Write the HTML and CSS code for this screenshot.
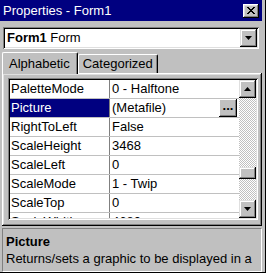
FILE: index.html
```html
<!DOCTYPE html>
<html lang="en">
<head>
    <meta charset="UTF-8">
    <title>Properties</title>
    <link rel="stylesheet" href="styles.css">
</head>
<body>
    <div class="window">
        <div class="titlebar">
            <span class="title">Properties - Form1</span>
            <div class="close">
                <svg width="8" height="7" viewBox="0 0 8 7"><path d="M0 0h2v1h1v1h2v-1h1v-1h2v1h-1v1h-1v1h-1v1h1v1h1v1h1v1h-2v-1h-1v-1h-2v1h-1v1h-2v-1h1v-1h1v-1h1v-1h-1v-1h-1v-1h-1z" fill="#000"/></svg>
            </div>
        </div>

        <div class="combo">
            <div class="combo-text"><b>Form1</b> Form</div>
            <div class="combo-btn">
                <svg width="7" height="4" viewBox="0 0 7 4"><path d="M0 0h7l-3.5 4z" fill="#000"/></svg>
            </div>
        </div>

        <div class="tabs">
            <div class="tab active">Alphabetic</div>
            <div class="tab">Categorized</div>
        </div>

        <div class="panel">
            <div class="grid">
                <div class="rows">
                    <div class="row"><div class="name">PaletteMode</div><div class="value">0 - Halftone</div></div>
                    <div class="row selected"><div class="name">Picture</div><div class="value">(Metafile)<span class="dots">...</span></div></div>
                    <div class="row"><div class="name">RightToLeft</div><div class="value">False</div></div>
                    <div class="row"><div class="name">ScaleHeight</div><div class="value">3468</div></div>
                    <div class="row"><div class="name">ScaleLeft</div><div class="value">0</div></div>
                    <div class="row"><div class="name">ScaleMode</div><div class="value">1 - Twip</div></div>
                    <div class="row"><div class="name">ScaleTop</div><div class="value">0</div></div>
                    <div class="row"><div class="name">ScaleWidth</div><div class="value">4680</div></div>
                </div>
                <div class="scrollbar">
                    <div class="sb-btn">
                        <svg width="7" height="4" viewBox="0 0 7 4"><path d="M3.5 0l3.5 4h-7z" fill="#000"/></svg>
                    </div>
                    <div class="track">
                        <div class="thumb"></div>
                    </div>
                    <div class="sb-btn">
                        <svg width="7" height="4" viewBox="0 0 7 4"><path d="M0 0h7l-3.5 4z" fill="#000"/></svg>
                    </div>
                </div>
            </div>
        </div>

        <div class="desc">
            <div class="desc-title">Picture</div>
            <div class="desc-text">Returns/sets a graphic to be displayed in a</div>
        </div>
    </div>
</body>
</html>
```

FILE: styles.css
```css
*{
    margin: 0;
    padding: 0;
    box-sizing: border-box;
}
body{
    background-color: #c0c0c0;
    font-family: "Liberation Sans", Arial, sans-serif;
    font-size: 13px;
    width: 266px;
    height: 273px;
    overflow: hidden;
}
.window{
    width: 266px;
    height: 273px;
    display: flex;
    flex-direction: column;
    border-right: 1px solid #000;
    border-bottom: 1px solid #000;
    padding-right: 3px;
}
.titlebar{
    height: 21px;
    background-color: #000080;
    color: #fff;
    display: flex;
    align-items: center;
    justify-content: space-between;
    padding: 0 3px 0 3px;
    font-size: 13px;
}
.close{
    width: 16px;
    height: 14px;
    background-color: #c0c0c0;
    box-shadow: inset -1px -1px #000, inset 1px 1px #fff, inset -2px -2px #808080, inset 2px 2px #dfdfdf;
    display: flex;
    align-items: center;
    justify-content: center;
}
.combo{
    margin: 6px 3px 0 3px;
    height: 22px;
    background-color: #fff;
    padding: 2px;
    box-shadow: inset 1px 1px #808080, inset -1px -1px #fff, inset 2px 2px #000, inset -2px -2px #dfdfdf;
    display: flex;
}
.combo-text{
    flex: 1;
    padding-left: 2px;
    line-height: 18px;
}
.combo-btn{
    width: 17px;
    background-color: #c0c0c0;
    box-shadow: inset -1px -1px #000, inset 1px 1px #dfdfdf, inset -2px -2px #808080, inset 2px 2px #fff;
    display: flex;
    align-items: center;
    justify-content: center;
}
.tabs{
    display: flex;
    margin-top: 3px;
    padding-left: 2px;
    height: 21px;
    align-items: flex-end;
    position: relative;
    z-index: 1;
}
.tab{
    height: 19px;
    padding: 0 4px;
    line-height: 18px;
    border-top: 1px solid #fff;
    border-left: 1px solid #fff;
    border-right: 1px solid #000;
    border-radius: 2px 2px 0 0;
    box-shadow: inset -1px 0 #808080;
}
.tab.active{
    height: 22px;
    margin-bottom: -1px;
    padding: 0 7px 0 6px;
    line-height: 22px;
    background-color: #c0c0c0;
}
.panel{
    margin-left: 2px;
    height: 153px;
    padding: 5px 4px 4px 6px;
    box-shadow: inset -1px -1px #000, inset 1px 1px #fff, inset -2px -2px #808080, inset 2px 2px #dfdfdf;
}
.grid{
    height: 142px;
    padding: 2px;
    background-color: #fff;
    box-shadow: inset 1px 1px #808080, inset -1px -1px #fff, inset 2px 2px #000, inset -2px -2px #dfdfdf;
    display: flex;
    overflow: hidden;
}
.rows{
    flex: 1;
    overflow: hidden;
}
.row{
    display: flex;
    height: 19px;
    border-bottom: 1px solid #c0c0c0;
    line-height: 18px;
}
.name{
    width: 100px;
    padding-left: 1px;
    border-right: 1px solid #808080;
}
.value{
    flex: 1;
    padding-left: 2px;
    display: flex;
}
.selected .name{
    background-color: #000080;
    color: #fff;
}
.dots{
    margin-left: auto;
    margin-right: 2px;
    width: 18px;
    height: 18px;
    background-color: #c0c0c0;
    box-shadow: inset -1px -1px #000, inset 1px 1px #fff, inset -2px -2px #808080;
    text-align: center;
    font-weight: bold;
    line-height: 14px;
}
.scrollbar{
    width: 17px;
    display: flex;
    flex-direction: column;
}
.sb-btn{
    height: 18px;
    background-color: #c0c0c0;
    box-shadow: inset -1px -1px #000, inset 1px 1px #dfdfdf, inset -2px -2px #808080, inset 2px 2px #fff;
    display: flex;
    align-items: center;
    justify-content: center;
}
.track{
    flex: 1;
    background-image: repeating-conic-gradient(#c0c0c0 0 25%, #fff 0 50%);
    background-size: 2px 2px;
    padding-top: 69px;
}
.thumb{
    height: 12px;
    background-color: #c0c0c0;
    box-shadow: inset -1px -1px #000, inset 1px 1px #dfdfdf, inset -2px -2px #808080, inset 2px 2px #fff;
}
.desc{
    margin: 2px 0 0 2px;
    flex: 1;
    padding: 5px 3px;
    border-top: 1px solid #808080;
    border-left: 1px solid #808080;
    border-bottom: 1px solid #fff;
    border-right: 1px solid #fff;
    overflow: hidden;
}
.desc-title{
    font-weight: bold;
    line-height: 16px;
}
.desc-text{
    white-space: nowrap;
    line-height: 18px;
}
```
